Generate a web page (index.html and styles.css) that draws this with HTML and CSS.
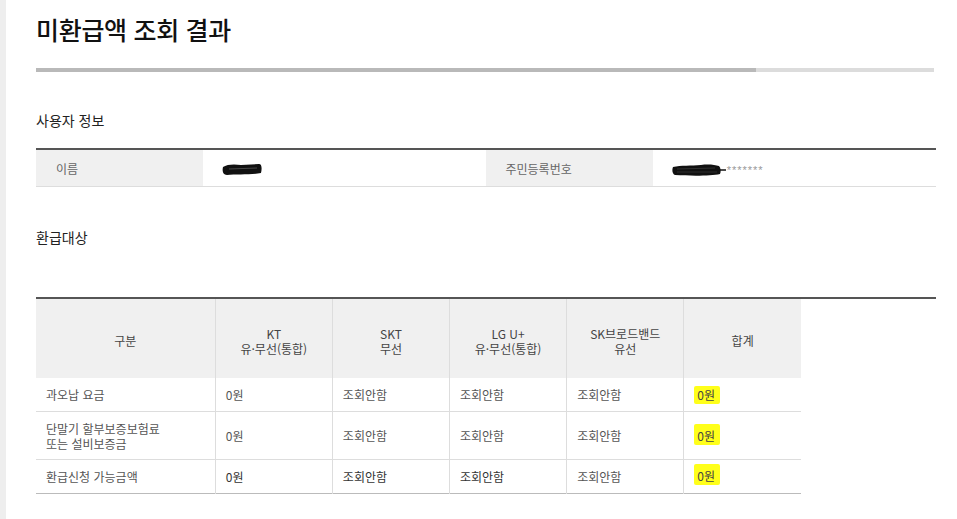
FILE: index.html
```html
<!DOCTYPE html>
<html lang="ko">
<head>
<meta charset="utf-8">
<title>미환급액 조회 결과</title>
<link rel="stylesheet" href="styles.css">
</head>
<body>
<div class="page">
  <h1 class="title">미환급액 조회 결과</h1>
  <div class="progress"><div class="progress-fill"></div></div>

  <h2 class="section-title st-user">사용자 정보</h2>
  <table class="info">
    <tr>
      <th class="info-label">이름</th>
      <td class="info-value">
        <svg class="scribble" width="42" height="16" viewBox="0 0 42 16"><path d="M2 6 C6 3 14 3 20 4 L38 3 C41 3 41 8 40 12 C30 14 15 13 6 14 C2 14 1 10 2 6 Z" fill="#111"/><path d="M8 8 L36 7" stroke="#555" stroke-width="0.8"/></svg>
      </td>
      <th class="info-label">주민등록번호</th>
      <td class="info-value">
        <svg class="scribble" width="56" height="14" viewBox="0 0 56 14"><path d="M2 4 C10 2 20 3 30 2 C38 1 44 2 48 3 C50 5 50 9 49 11 C40 13 20 13 4 12 C1 11 1 6 2 4 Z" fill="#111"/><path d="M48 7 L55 7" stroke="#111" stroke-width="1.5"/><path d="M6 6 L44 5 M6 9 L46 9" stroke="#444" stroke-width="0.6"/></svg><span class="stars">*******</span>
      </td>
    </tr>
  </table>

  <h2 class="section-title st-refund">환급대상</h2>
  <div class="result-wrap">
    <table class="result">
      <colgroup>
        <col class="c1"><col class="c2"><col class="c2"><col class="c2"><col class="c2"><col class="c2">
      </colgroup>
      <thead>
        <tr>
          <th>구분</th>
          <th>KT<br>유·무선(통합)</th>
          <th>SKT<br>무선</th>
          <th>LG U+<br>유·무선(통합)</th>
          <th>SK브로드밴드<br>유선</th>
          <th>합계</th>
        </tr>
      </thead>
      <tbody>
        <tr class="r1">
          <td>과오납 요금</td>
          <td>0원</td>
          <td>조회안함</td>
          <td>조회안함</td>
          <td>조회안함</td>
          <td><span class="hl hl1">0원</span></td>
        </tr>
        <tr class="r2">
          <td>단말기 할부보증보험료<br>또는 설비보증금</td>
          <td>0원</td>
          <td>조회안함</td>
          <td>조회안함</td>
          <td>조회안함</td>
          <td><span class="hl hl2">0원</span></td>
        </tr>
        <tr class="r3">
          <td>환급신청 가능금액</td>
          <td class="strong">0원</td>
          <td class="strong">조회안함</td>
          <td class="strong">조회안함</td>
          <td>조회안함</td>
          <td><span class="hl hl3">0원</span></td>
        </tr>
      </tbody>
    </table>
  </div>
</div>
</body>
</html>
```

FILE: styles.css
```css
html, body {
  margin: 0;
  padding: 0;
  background: #fff;
}
body {
  font-family: "Noto Sans CJK KR", "Noto Sans", sans-serif;
  color: #333;
}
.page {
  border-left: 6px solid #eeeeee;
  padding: 0 0 0 30px;
  width: 900px;
  min-height: 519px;
  box-sizing: content-box;
}
.title {
  margin: 0;
  padding-top: 13px;
  font-size: 25px;
  line-height: 33px;
  font-weight: 500;
  color: #111;
  letter-spacing: -0.3px;
}
.progress {
  margin-top: 22px;
  width: 898px;
  height: 4px;
  background: #dcdcdc;
}
.progress-fill {
  width: 720px;
  height: 4px;
  background: #b9b9b9;
}
.section-title {
  margin: 0;
  font-size: 14px;
  line-height: 20px;
  font-weight: 400;
  color: #222;
}
.st-user {
  margin-top: 38px;
}
.info {
  margin-top: 18px;
  width: 900px;
  border-collapse: collapse;
  border-top: 2px solid #555;
  border-bottom: 1px solid #ddd;
  table-layout: fixed;
}
.info th, .info td {
  height: 36px;
  padding: 0;
  font-size: 12px;
  font-weight: 400;
  text-align: left;
  vertical-align: middle;
}
.info-label {
  background: #f0f0f0;
  color: #666;
  padding-left: 20px !important;
  width: 147px;
}
.info-label + .info-value {
  width: 265px;
}
.info-value {
  padding-left: 18px !important;
  color: #888;
}
.info th:nth-of-type(2) {
  padding-left: 19px !important;
}
.scribble {
  vertical-align: middle;
}
.stars {
  font-family: "Liberation Sans", sans-serif;
  font-size: 11px;
  color: #999;
  letter-spacing: 1px;
  vertical-align: middle;
}
.st-refund {
  margin-top: 40px;
}
.result-wrap {
  margin-top: 50px;
  width: 900px;
  border-top: 2px solid #555;
}
.result {
  width: 765px;
  border-collapse: collapse;
  table-layout: fixed;
  border-bottom: 1px solid #bbb;
}
.c1 { width: 179px; }
.c2 { width: 117px; }
.result th {
  background: #f0f0f0;
  height: 79px;
  padding: 0;
  font-size: 12px;
  line-height: 15px;
  font-weight: 400;
  color: #444;
  text-align: center;
  vertical-align: middle;
  border-left: 1px solid #ddd;
  padding-top: 4px;
  box-sizing: border-box;
}
.result th:first-child { border-left: 0; }
.result td {
  padding: 0 0 0 10px;
  font-size: 12px;
  line-height: 15px;
  color: #555;
  text-align: left;
  vertical-align: middle;
  border-left: 1px solid #ddd;
  border-top: 1px solid #ddd;
}
.result td:first-child { border-left: 0; }
.result thead + tbody tr:first-child td { border-top: 0; }
.r1 td { height: 33px; }
.r2 td { height: 47px; }
.r3 td { height: 33px; }
.result td.strong { color: #333; }
.hl {
  display: inline-block;
  background: #ffff1a;
  color: #444;
  padding: 2px 5px 2px 3px;
  line-height: 14px;
  border-radius: 2px;
}
.hl2 { padding-top: 5px; margin-top: -3px; }
.hl3 { padding-top: 5px; margin-top: -4px; }
```
